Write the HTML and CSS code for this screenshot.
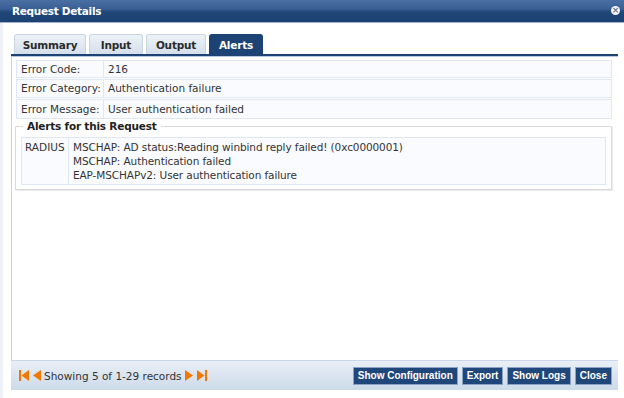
FILE: index.html
```html
<!DOCTYPE html>
<html lang="en">
<head>
  <meta charset="UTF-8">
  <title>Request Details</title>
  <link rel="stylesheet" href="styles.css">
</head>
<body>
  <div class="titlebar">
    <span class="title">Request Details</span>
    <span class="close">&times;</span>
  </div>

  <div class="dialog">
    <div class="tabs">
      <div class="tab tab-summary">Summary</div>
      <div class="tab tab-input">Input</div>
      <div class="tab tab-output">Output</div>
      <div class="tab tab-alerts active">Alerts</div>
    </div>

    <div class="panel">
      <div class="row">
        <div class="label">Error Code:</div>
        <div class="value">216</div>
      </div>
      <div class="row">
        <div class="label">Error Category:</div>
        <div class="value">Authentication failure</div>
      </div>
      <div class="row">
        <div class="label">Error Message:</div>
        <div class="value">User authentication failed</div>
      </div>

      <fieldset class="alerts">
        <legend>Alerts for this Request</legend>
        <div class="alert-row">
          <div class="source">RADIUS</div>
          <div class="messages">
            <div>MSCHAP: AD status:Reading winbind reply failed! (0xc0000001)</div>
            <div>MSCHAP: Authentication failed</div>
            <div>EAP-MSCHAPv2: User authentication failure</div>
          </div>
        </div>
      </fieldset>
    </div>

    <div class="footer">
      <div class="pager">
        <svg width="10" height="11" viewBox="0 0 10 11"><rect x="0" y="0" width="2" height="11" fill="#f07800"/><polygon points="10,0 10,11 2.5,5.5" fill="#f07800"/></svg>
        <svg width="9" height="11" viewBox="0 0 9 11"><polygon points="9,0 9,11 1,5.5" fill="#f07800"/></svg>
        <span class="count">Showing 5 of 1-29 records</span>
        <svg width="9" height="11" viewBox="0 0 9 11"><polygon points="0,0 0,11 8,5.5" fill="#f07800"/></svg>
        <svg width="10" height="11" viewBox="0 0 10 11"><polygon points="0,0 0,11 7.5,5.5" fill="#f07800"/><rect x="8" y="0" width="2" height="11" fill="#f07800"/></svg>
      </div>
      <div class="buttons">
        <button>Show Configuration</button>
        <button>Export</button>
        <button>Show Logs</button>
        <button>Close</button>
      </div>
    </div>
  </div>
</body>
</html>
```

FILE: styles.css
```css
body {
  margin: 0;
  width: 624px;
  height: 398px;
  overflow: hidden;
  background: #fff;
  font-family: "DejaVu Sans", Verdana, sans-serif;
  font-size: 10.5px;
  color: #333;
}
.titlebar {
  height: 22px;
  display: flex;
  align-items: center;
  justify-content: space-between;
  padding: 0 4px 0 12px;
  background: linear-gradient(#4a6fa3, #3a5f94 40%, #1f4677 55%, #1b4272);
  border-bottom: 1px solid #9fb3cf;
  color: #fff;
}
.title {
  font-weight: bold;
  font-size: 10.5px;
  letter-spacing: -0.3px;
}
.close {
  width: 9px;
  height: 9px;
  border-radius: 50%;
  background: #f4f6f9;
  color: #6b7c92;
  font-size: 9px;
  line-height: 9px;
  text-align: center;
  font-weight: bold;
  margin-bottom: 2px;
}
.dialog {
  height: 375px;
  display: flex;
  flex-direction: column;
  padding: 0 6px 0 0;
  border-left: 3px solid #eef2f8;
}
.tabs {
  display: flex;
  gap: 3px;
  padding: 11px 0 0 3px;
  margin-left: 8px;
  border-bottom: 2px solid #1c4373;
  box-shadow: 0 1px 0 #b9c9e0;
}
.tab {
  height: 20px;
  line-height: 21px;
  text-align: center;
  font-weight: bold;
  font-size: 10.5px;
  color: #2b2b2b;
  background: linear-gradient(#eef2f7, #d5dfeb);
  border: 1px solid #c9d4e2;
  border-bottom: none;
  border-radius: 3px 3px 0 0;
  box-sizing: border-box;
  letter-spacing: -0.2px;
}
.tab-summary { width: 72px; }
.tab-input { width: 54px; }
.tab-output { width: 60px; }
.tab-alerts { width: 54px; }
.tab.active {
  background: #1c4373;
  border-color: #1c4373;
  color: #fff;
}
.panel {
  flex: 1;
  margin-left: 8px;
  margin-top: 1px;
  padding: 3px 6px 0 4px;
  border-left: 1px solid #c5d2e5;
}
.row {
  display: flex;
  height: 18px;
  margin-bottom: 1px;
  background: #fafbff;
  border: 1px solid #dfe7f4;
  box-sizing: border-box;
  line-height: 16px;
}
.row:nth-child(2) { height: 19px; line-height: 17px; }
.row:nth-child(3) { height: 20px; line-height: 18px; }
.label {
  width: 82px;
  padding-left: 4px;
  border-right: 1px solid #dfe7f4;
}
.value {
  padding-left: 4px;
}
.alerts {
  margin: 1px 0 0 -1px;
  padding: 0 5px 4px 5px;
  border: 1px solid #d9d9d9;
  box-shadow: 1px 1px 0 #ececec;
}
.alerts legend {
  font-weight: bold;
  color: #222;
  padding: 0 4px;
  margin-left: 2px;
  letter-spacing: -0.2px;
}
.alert-row {
  display: flex;
  background: #fafbff;
  border: 1px solid #dfe7f4;
  line-height: 14px;
  margin-top: 5px;
}
.source {
  width: 47px;
  padding: 2px 0 0 3px;
  border-right: 1px solid #dfe7f4;
  box-sizing: border-box;
}
.messages {
  padding: 2px 4px 2px 4px;
  letter-spacing: -0.1px;
}
.footer {
  height: 29px;
  margin-left: 8px;
  margin-bottom: 8px;
  display: flex;
  align-items: center;
  justify-content: space-between;
  padding: 0 6px 0 8px;
  border-top: 1px solid #c9d6e8;
  background: linear-gradient(#e9eff6, #ccdae9);
}
.pager {
  display: flex;
  align-items: center;
  gap: 3px;
}
.count {
  color: #333;
}
.buttons {
  display: flex;
  gap: 4px;
}
button {
  font-family: "Liberation Sans", Arial, sans-serif;
  font-weight: bold;
  font-size: 10px;
  color: #fff;
  background: #1f477a;
  border: 1px solid #8aa3c4;
  padding: 0 4px;
  height: 18px;
  border-radius: 0;
}
```
